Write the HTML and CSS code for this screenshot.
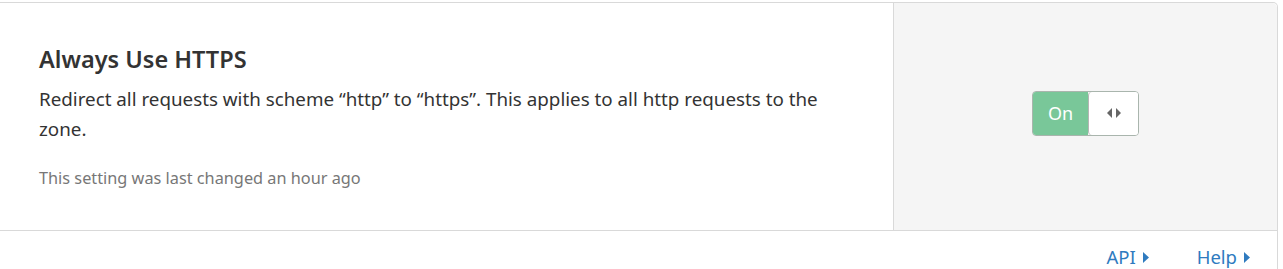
FILE: index.html
```html
<!DOCTYPE html>
<html>
<head>
<meta charset="utf-8">
<link rel="stylesheet" href="styles.css">
</head>
<body>
<div class="card">
  <div class="row">
    <div class="main">
      <h3 class="title">Always Use HTTPS</h3>
      <p class="desc">Redirect all requests with scheme “http” to “https”. This applies to all http requests to the zone.</p>
      <p class="meta">This setting was last changed an hour ago</p>
    </div>
    <div class="control">
      <div class="toggle">
        <span class="toggle-on">On</span>
        <span class="toggle-handle">
          <svg width="14" height="10" viewBox="0 0 14 10"><path d="M5 0 L5 10 L0 5 Z" fill="#666"/><path d="M9 0 L14 5 L9 10 Z" fill="#666"/></svg>
        </span>
      </div>
    </div>
  </div>
  <div class="footer">
    <a class="link" href="#">API<svg class="caret" width="6" height="11" viewBox="0 0 6 11"><path d="M0 0 L6 5.5 L0 11 Z" fill="#2f7bbf"/></svg></a>
    <a class="link" href="#">Help<svg class="caret" width="6" height="11" viewBox="0 0 6 11"><path d="M0 0 L6 5.5 L0 11 Z" fill="#2f7bbf"/></svg></a>
  </div>
</div>
</body>
</html>
```
FILE: styles.css
```css
html, body {
  margin: 0;
  padding: 0;
  background: #fff;
}
body {
  font-family: "Noto Sans", "Open Sans", sans-serif;
  color: #333;
  padding-top: 2px;
}
.card {
  width: 1277px;
  border: 1px solid #d9d9d9;
  border-left: none;
  border-radius: 0 5px 0 0;
}
.row {
  display: flex;
  border-bottom: 1px solid #d9d9d9;
  height: 227px;
}
.main {
  width: 854px;
  padding: 41px 0 0 39px;
  border-right: 1px solid #d9d9d9;
  background: #fff;
}
.title {
  margin: 0;
  font-size: 23.5px;
  font-weight: 600;
  line-height: 30px;
  color: #333;
}
.desc {
  margin: 10px 0 0;
  font-size: 18.8px;
  line-height: 30px;
  color: #333;
  max-width: 800px;
}
.meta {
  margin: 24px 0 0;
  font-size: 16.3px;
  line-height: 20px;
  color: #777;
}
.control {
  flex: 1;
  background: #f5f5f5;
  display: flex;
  align-items: center;
  justify-content: center;
  border-top-right-radius: 5px;
  padding-bottom: 7px;
}
.toggle {
  display: flex;
  height: 43px;
  border: 1px solid #a9b5ad;
  border-radius: 4px;
  overflow: hidden;
}
.toggle-on {
  width: 55px;
  background: #79c799;
  color: #fff;
  font-size: 18px;
  display: flex;
  align-items: center;
  justify-content: center;
}
.toggle-handle {
  width: 49px;
  background: #fff;
  border-left: 1px solid #b5b5b5;
  border-radius: 4px 0 0 4px;
  display: flex;
  align-items: center;
  justify-content: center;
}
.footer {
  display: flex;
  justify-content: flex-end;
  gap: 48px;
  padding: 14px 27px 12px 0;
}
.link {
  color: #2f7bbf;
  text-decoration: none;
  font-size: 18.5px;
  line-height: 24px;
  display: flex;
  align-items: center;
  gap: 7px;
}
```
